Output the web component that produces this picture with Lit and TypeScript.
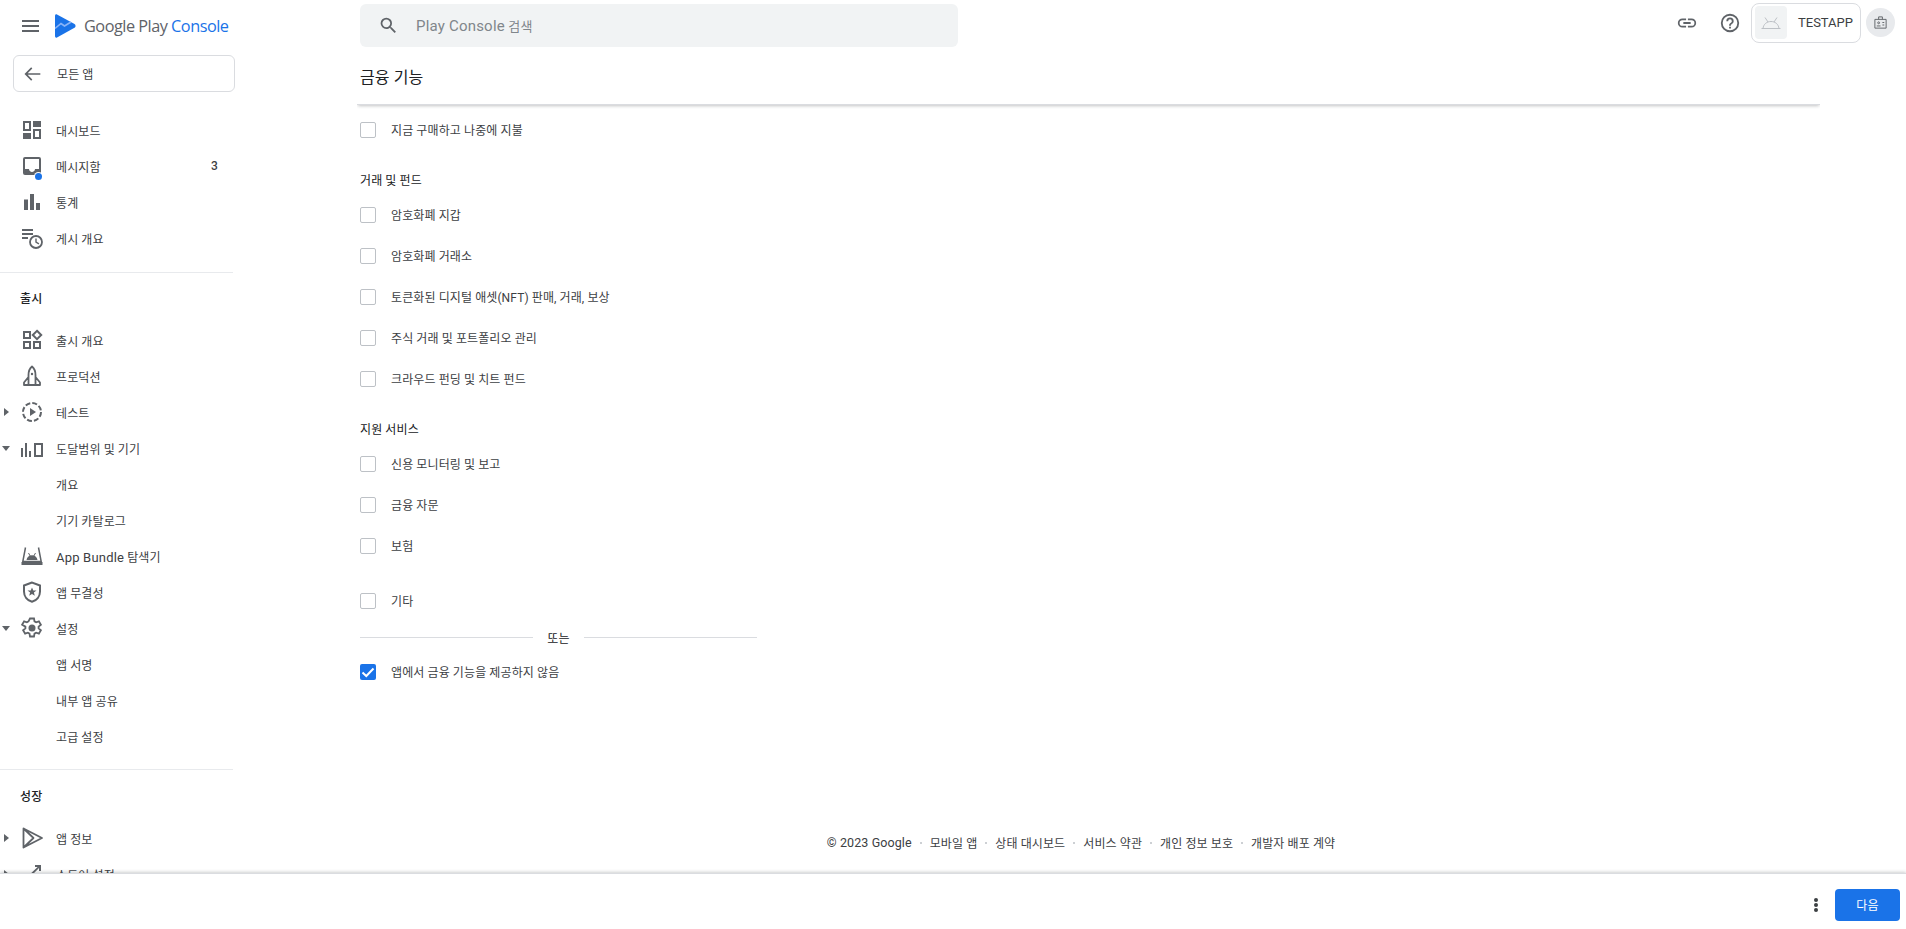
import { LitElement, html, css, svg } from "lit";
import { customElement } from "lit/decorators.js";

const I = (body: unknown, size = 24) => html`<svg class="ico" width=${size} height=${size} viewBox="0 0 24 24" fill="#5f6368">${body}</svg>`;
const ICONS: Record<string, unknown> = {
  dash: svg`<path fill-rule="evenodd" d="M3 3h8v10H3zM5 5v6h4V5zM13 3h8v6h-8zM13 11h8v10h-8zM15 13v6h4v-6zM3 15h8v6H3z"/>`,
  inbox: svg`<path d="M19 3H5a2 2 0 0 0-2 2v14a2 2 0 0 0 2 2h14a2 2 0 0 0 2-2V5a2 2 0 0 0-2-2zm0 12h-4c0 1.66-1.35 3-3 3s-3-1.34-3-3H5V5h14z"/>`,
  stats: svg`<path d="M4 9.500h4V20H4zM10 4h4v16h-4zM16 13h4v7h-4z"/>`,
  pub: svg`<path d="M2 3h11v2H2zM2 7h11v2H2zM2 11h6v2H2z"/><circle cx="16" cy="16" r="6" fill="none" stroke="#5f6368" stroke-width="1.800"/><path d="M15.300 12.500h1.400v3.300l2.600 1.500-.7 1.100-3.300-1.900z"/>`,
  rel: svg`<path fill-rule="evenodd" d="M3 3h8v8H3zM5 5v4h4V5zM3 13h8v8H3zM5 15v4h4v-4zM13 13h8v8h-8zM15 15v4h4v-4z"/><path fill="none" stroke="#5f6368" stroke-width="2" d="M17 2.800 21.200 7 17 11.200 12.800 7z"/>`,
  prod: svg`<path fill="none" stroke="#5f6368" stroke-width="1.800" stroke-linejoin="round" d="M12 2.500c2.200 1.800 3.500 4.800 3.500 8.500v10h-7V11c0-3.700 1.300-6.700 3.500-8.500zM8.500 13 4 18.500V21h4.500M15.500 13l4.500 5.500V21h-4.500"/><circle cx="12" cy="10" r="1.200"/>`,
  test: svg`<path d="M10 8l6 4-6 4z"/><circle cx="12" cy="12" r="9" fill="none" stroke="#5f6368" stroke-width="2" stroke-dasharray="5 2.070"/>`,
  reach: svg`<path d="M1 12h2v9H1zM5 7h2v14H5zM9 15h2v6H9z"/><path fill-rule="evenodd" d="M14 7h9v14h-9zM16 9v10h5V9z"/>`,
  bundle: svg`<path fill="none" stroke="#5f6368" stroke-width="1.500" d="M5.500 3.500 2.800 17.500h18.400L18.500 3.500"/><path d="M1.500 18h21v3h-21zM6.500 16c.4-3 2.800-4.800 5.500-4.800s5.100 1.800 5.500 4.800z"/><path d="M8.500 9l1.700 3M15.500 9l-1.700 3" stroke="#5f6368" stroke-width="1"/>`,
  shield: svg`<path fill="none" stroke="#5f6368" stroke-width="2" d="M12 2.500 4 5.500v6c0 5 3.300 9 8 10.300 4.700-1.300 8-5.300 8-10.300v-6z"/><path d="m12 7.500 1.300 3h3.200l-2.600 2.100.9 3.200-2.800-1.800-2.800 1.800.9-3.200-2.600-2.100h3.200z"/>`,
  gear: svg`<circle cx="12" cy="12" r="3.500"/><path fill="none" stroke="#5f6368" stroke-width="1.800" d="M10 2.500h4l.5 2.900 1.600.9 2.800-1 2 3.400-2.300 1.900v1.800l2.300 1.900-2 3.400-2.800-1-1.600.9-.5 2.900h-4l-.5-2.900-1.600-.9-2.800 1-2-3.400 2.300-1.900v-1.800L2.100 8.700l2-3.400 2.800 1 1.600-.9z"/>`,
  play: svg`<path fill="none" stroke="#5f6368" stroke-width="1.800" stroke-linejoin="round" d="M3.500 2.500 22 12 3.500 21.500zM3.500 2.500 13.500 12 3.500 21.500"/>`,
  store: svg`<path d="M3 16h10v2H3zM15 3h6v6h-2V6l-8 8-1.400-1.400L17.600 5H15z"/>`,
};

@customElement("app-root")
export class AppRoot extends LitElement {
  static styles = css`
    :host { display: flex; flex-direction: column; height: 100vh; overflow: hidden; background: #fff;
      font-family: Roboto, "Noto Sans CJK KR", sans-serif; font-size: 12px; letter-spacing: .1px; color: #3c4043; }
    .lat { font-size: 13px; letter-spacing: .2px; }
    .body { flex: 1; min-height: 0; display: flex; }
    .side { width: 236px; flex: none; overflow: hidden; }
    .brand { height: 52px; display: flex; align-items: center; padding-left: 22px; }
    .burger { display: flex; flex-direction: column; gap: 3px; width: 17px; flex: none; margin-right: 16px; }
    .burger i { height: 2px; background: #5f6368; }
    .logo { flex: none; margin-right: 8px; }
    .wordmark { font-family: "Open Sans", Roboto, sans-serif; font-size: 16.3px; color: #5f6368; letter-spacing: -0.5px; white-space: nowrap; }
    .wordmark b { font-weight: 400; color: #1a73e8; }
    .back { margin: 3px 0 0 13px; width: 222px; height: 37px; box-sizing: border-box; border: 1px solid #dadce0; border-radius: 6px;
      display: flex; align-items: center; padding-left: 8px; gap: 15px; }
    .navlist { padding-top: 20px; }
    .row { height: 36px; display: flex; align-items: center; position: relative; padding-left: 20px; }
    .row .lbl { margin-left: 12px; white-space: nowrap; }
    .row.sub .lbl { margin-left: 36px; }
    .caret { position: absolute; left: 2px; top: 50%; width: 0; height: 0; }
    .caret.r { left: 4px; margin-top: -4px; border-left: 5px solid #5f6368; border-top: 4px solid transparent; border-bottom: 4px solid transparent; }
    .caret.d { margin-top: -2px; border-top: 5px solid #5f6368; border-left: 4px solid transparent; border-right: 4px solid transparent; }
    .count { position: absolute; left: 211px; font-weight: 500; }
    .dot { position: absolute; left: 35px; top: 25px; width: 7px; height: 7px; border-radius: 50%; background: #1a73e8; box-shadow: 0 0 0 1px #fff; }
    .div { height: 1px; width: 233px; background: #e8eaed; margin-top: 16px; }
    .div.two { margin-top: 15px; }
    .head { height: 49px; display: flex; align-items: center; padding-left: 20px; font-weight: 500; color: #202124; }
    .head.two { height: 50px; }
    .main { flex: 1; min-width: 0; display: flex; flex-direction: column; }
    .top { height: 52px; flex: none; display: flex; align-items: center; padding-left: 124px; }
    .search { width: 598px; height: 43px; margin-top: -1px; background: #f1f3f4; border-radius: 6px; display: flex; align-items: center; padding-left: 18px; box-sizing: border-box;
      gap: 17px; color: #80868b; font-size: 13px; letter-spacing: .2px; }
    .search .lat { font-size: 15px; }
    .tools { margin-left: auto; display: flex; align-items: center; padding-right: 11px; margin-top: -7px; }
    .tools .link { margin-right: 21px; }
    .tools .help { margin-right: 10px; }
    .app { width: 110px; height: 40px; box-sizing: border-box; border: 1px solid #dadce0; border-radius: 8px; display: flex; align-items: center; padding-left: 3px; gap: 11px; font-size: 13px; letter-spacing: 0; color: #3c4043; }
    .tile { width: 32px; height: 33px; background: #f1f3f4; border-radius: 4px; display: flex; align-items: center; justify-content: center; }
    .acct { width: 29px; height: 29px; border-radius: 50%; background: #e8eaed; margin-left: 5px; display: flex; align-items: center; justify-content: center; }
    .content { flex: 1; min-height: 0; padding-left: 124px; padding-right: 86px; display: flex; flex-direction: column; }
    .title { height: 53px; margin-left: -3px; padding-left: 3px; display: flex; align-items: center; padding-bottom: 5px; box-sizing: border-box; font-size: 16px; color: #202124; border-bottom: 1px solid #dadce0; box-shadow: 0 2px 3px -1px rgba(60,64,67,.3); clip-path: inset(0 0 -6px 0); flex: none; }
    .ck { display: flex; align-items: center; gap: 15px; height: 41px; }
    .box { width: 16px; height: 16px; box-sizing: border-box; border: 1px solid #bdc1c6; border-radius: 2px; flex: none; background: #fff; }
    .box.on { background: #1a73e8; border: 0; display: flex; align-items: center; justify-content: center; }
    .g { height: 20px; display: flex; align-items: center; color: #202124; }
    .s4 { height: 4px; } .s5 { height: 5px; } .s19 { height: 19px; } .s14 { height: 14px; }
    .or { display: flex; align-items: center; width: 397px; gap: 14px; color: #202124; margin-top: 6px; height: 20px; margin-bottom: 4px; }
    .or i { flex: 1; height: 1px; background: #dadce0; }
    .foot { margin-top: auto; height: 31px; margin-bottom: 15px; padding-right: 18px; display: flex; align-items: center; justify-content: center; gap: 8px; color: #3c4043; }
    .foot .lat { font-size: 12.5px; letter-spacing: .1px; }
    .foot u { width: 2px; height: 2px; border-radius: 50%; background: #bdc1c6; }
    .bar { height: 56px; box-sizing: border-box; flex: none; border-top: 1px solid #dadce0; box-shadow: 0 -1px 3px rgba(60,64,67,.25); position: relative; background: #fff; display: flex; align-items: center; justify-content: flex-end; padding: 6px 6px 0 0; }
    .next { width: 65px; height: 32px; background: #1a73e8; color: #fff; border-radius: 4px; display: flex; align-items: center; justify-content: center; }
    .more { display: flex; flex-direction: column; gap: 1px; margin-right: 17px; }
    .more i { width: 4px; height: 4px; border-radius: 50%; background: #3c4043; }
  `;

  row(icon: string | null, label: unknown, opts: { caret?: string; count?: string; dot?: boolean } = {}) {
    return html`<div class="row ${icon ? "" : "sub"}">
      ${opts.caret ? html`<span class="caret ${opts.caret}"></span>` : ""}
      ${icon ? I(ICONS[icon]) : ""}
      ${opts.dot ? html`<span class="dot"></span>` : ""}
      <span class="lbl">${label}</span>
      ${opts.count ? html`<span class="count">${opts.count}</span>` : ""}
    </div>`;
  }

  ck(label: string, on = false) {
    return html`<div class="ck">
      ${on
        ? html`<span class="box on"><svg width="14" height="14" viewBox="0 0 14 14"><path d="M1.500 7.500 5.300 11 12.500 3.500" fill="none" stroke="#fff" stroke-width="2"/></svg></span>`
        : html`<span class="box"></span>`}
      <span>${label}</span>
    </div>`;
  }

  render() {
    return html`
      <div class="body">
        <aside class="side">
          <div class="brand">
            <span class="burger"><i></i><i></i><i></i></span>
            <svg class="logo" width="21" height="24" viewBox="0 0 21 24"><path d="M0 2c0-1.500 1-2 2-1.500l17.500 9.500c1.400.8 1.400 3 0 3.800L2 23.500C1 24 0 23.500 0 22z" fill="#1a73e8"/><path d="M0 14.500 6 9.500l3.500 2.500L16 8" fill="none" stroke="#8ab4f8" stroke-width="1.600"/></svg>
            <span class="wordmark">Google Play <b>Console</b></span>
          </div>
          <div class="back">
            <svg width="20" height="20" viewBox="0 0 24 24" fill="#5f6368"><path d="M22 11H6.800l5.600-5.600L11 4l-8 8 8 8 1.400-1.400L6.800 13H22z"/></svg>
            <span>모든 앱</span>
          </div>
          <div class="navlist">
            ${this.row("dash", "대시보드")}
            ${this.row("inbox", "메시지함", { count: "3", dot: true })}
            ${this.row("stats", "통계")}
            ${this.row("pub", "게시 개요")}
          </div>
          <div class="div"></div>
          <div class="head">출시</div>
          ${this.row("rel", "출시 개요")}
          ${this.row("prod", "프로덕션")}
          ${this.row("test", "테스트", { caret: "r" })}
          ${this.row("reach", "도달범위 및 기기", { caret: "d" })}
          ${this.row(null, "개요")}
          ${this.row(null, "기기 카탈로그")}
          ${this.row("bundle", html`<span class="lat">App Bundle</span> 탐색기`)}
          ${this.row("shield", "앱 무결성")}
          ${this.row("gear", "설정", { caret: "d" })}
          ${this.row(null, "앱 서명")}
          ${this.row(null, "내부 앱 공유")}
          ${this.row(null, "고급 설정")}
          <div class="div two"></div>
          <div class="head two">성장</div>
          ${this.row("play", "앱 정보", { caret: "r" })}
          ${this.row("store", "스토어 설정", { caret: "r" })}
        </aside>
        <div class="main">
          <div class="top">
            <div class="search">
              <svg width="21" height="21" viewBox="0 0 24 24" fill="#5f6368"><path d="M15.500 14h-.79l-.28-.27A6.471 6.471 0 0 0 16 9.500 6.500 6.500 0 1 0 9.500 16c1.610 0 3.090-.59 4.230-1.570l.27.28v.79l5 4.990L20.490 19l-4.990-5zm-6 0C7.010 14 5 11.990 5 9.500S7.010 5 9.500 5 14 7.010 14 9.500 11.990 14 9.500 14z"/></svg>
              <span><span class="lat">Play Console</span> 검색</span>
            </div>
            <div class="tools">
              <svg class="link" width="22" height="22" viewBox="0 0 24 24" fill="#5f6368"><path d="M3.900 12A3.100 3.100 0 0 1 7 8.900h4V7H7a5 5 0 0 0 0 10h4v-1.900H7A3.100 3.100 0 0 1 3.900 12zM8 13h8v-2H8zm9-6h-4v1.900h4a3.100 3.100 0 0 1 0 6.200h-4V17h4a5 5 0 0 0 0-10z"/></svg>
              <svg class="help" width="22" height="22" viewBox="0 0 24 24" fill="#5f6368"><path d="M11 18h2v-2h-2zm1-16a10 10 0 1 0 0 20 10 10 0 0 0 0-20zm0 18a8 8 0 1 1 0-16 8 8 0 0 1 0 16zm0-14a4 4 0 0 0-4 4h2a2 2 0 1 1 4 0c0 2-3 1.750-3 5h2c0-2.250 3-2.500 3-5a4 4 0 0 0-4-4z"/></svg>
              <div class="app">
                <span class="tile"><svg width="22" height="14" viewBox="0 0 22 14" fill="none" stroke="#bdc1c6" stroke-width="1"><path d="M1.500 12.500h19M3 12.500C3.500 8 7 5.500 11 5.500s7.500 2.500 8 7M5 1.500 8 6M17 1.500 14 6"/></svg></span>
                <span>TESTAPP</span>
              </div>
              <span class="acct"><svg width="15" height="15" viewBox="0 0 24 24" fill="none" stroke="#5f6368" stroke-width="1.500"><path d="M3 7h18v14H3zM9 7V3h6v4"/><circle cx="9" cy="12.500" r="1.500"/><path d="M6 17.500h6M15 12h3M15 16h3"/></svg></span>
            </div>
          </div>
          <div class="content">
            <div class="title">금융 기능</div>
            <div class="s4"></div>
            ${this.ck("지금 구매하고 나중에 지불")}
            <div class="s19"></div>
            <div class="g">거래 및 펀드</div>
            <div class="s5"></div>
            ${this.ck("암호화폐 지갑")}
            ${this.ck("암호화폐 거래소")}
            ${this.ck("토큰화된 디지털 애셋(NFT) 판매, 거래, 보상")}
            ${this.ck("주식 거래 및 포트폴리오 관리")}
            ${this.ck("크라우드 펀딩 및 치트 펀드")}
            <div class="s19"></div>
            <div class="g">지원 서비스</div>
            <div class="s5"></div>
            ${this.ck("신용 모니터링 및 보고")}
            ${this.ck("금융 자문")}
            ${this.ck("보험")}
            <div class="s14"></div>
            ${this.ck("기타")}
            <div class="or"><i></i><span>또는</span><i></i></div>
            ${this.ck("앱에서 금융 기능을 제공하지 않음", true)}
            <div class="foot">
              <span class="lat">© 2023 Google</span><u></u><span>모바일 앱</span><u></u><span>상태 대시보드</span><u></u><span>서비스 약관</span><u></u><span>개인 정보 보호</span><u></u><span>개발자 배포 계약</span>
            </div>
          </div>
        </div>
      </div>
      <div class="bar">
        <span class="more"><i></i><i></i><i></i></span>
        <span class="next">다음</span>
      </div>
    `;
  }
}
